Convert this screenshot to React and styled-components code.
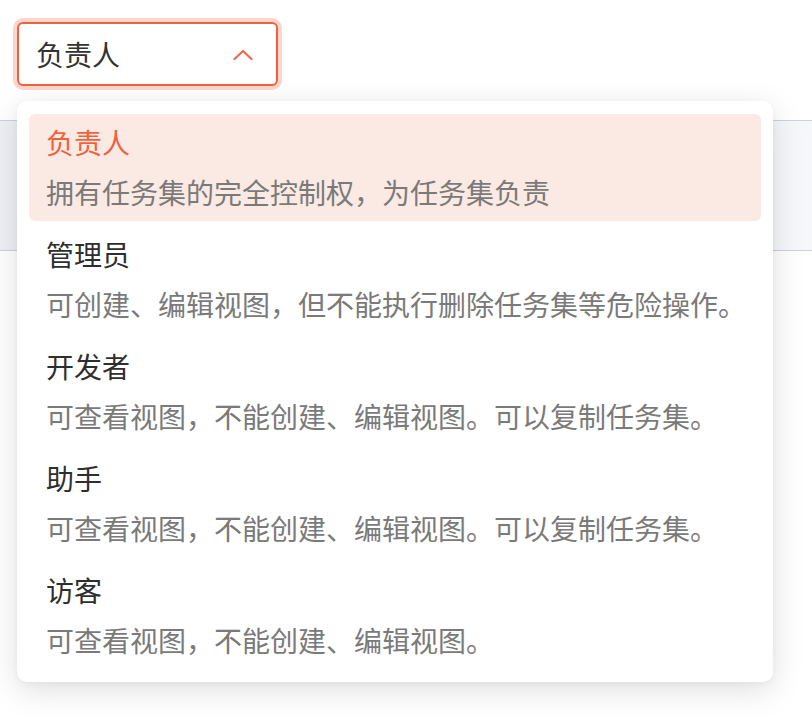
import React from "react";
import styled, { createGlobalStyle } from "styled-components";

const GlobalStyle = createGlobalStyle`
  body {
    margin: 0;
    background: #fff;
    font-family: "Noto Sans CJK SC", "Noto Sans", sans-serif;
  }
`;

const roles = [
  { name: "负责人", desc: "拥有任务集的完全控制权，为任务集负责" },
  { name: "管理员", desc: "可创建、编辑视图，但不能执行删除任务集等危险操作。" },
  { name: "开发者", desc: "可查看视图，不能创建、编辑视图。可以复制任务集。" },
  { name: "助手", desc: "可查看视图，不能创建、编辑视图。可以复制任务集。" },
  { name: "访客", desc: "可查看视图，不能创建、编辑视图。" },
];

const Page = styled.div`
  width: 812px;
  height: 722px;
  overflow: hidden;
`;

const Header = styled.div`
  padding: 22px 17px 0;
`;

const SelectWrap = styled.div`
  position: relative;
  width: 261px;
  z-index: 2;
`;

const Trigger = styled.button`
  box-sizing: border-box;
  width: 261px;
  height: 64px;
  display: flex;
  align-items: center;
  justify-content: space-between;
  padding: 0 23px 0 17px;
  background: #fff;
  border: 2px solid #f0623f;
  border-radius: 6px;
  box-shadow: 0 0 0 4px #fcd6cc;
  font-family: inherit;
  font-size: 28px;
  color: #333;
  cursor: pointer;
`;

const Menu = styled.ul`
  position: absolute;
  top: 79px;
  left: 0;
  box-sizing: border-box;
  width: 756px;
  margin: 0;
  padding: 13px 12px;
  list-style: none;
  display: flex;
  flex-direction: column;
  gap: 5px;
  background: #fff;
  border-radius: 10px;
  box-shadow: 0 8px 32px rgba(0, 0, 0, 0.13), 0 2px 6px rgba(0, 0, 0, 0.04);
`;

const Item = styled.li`
  padding: 8px 17px 9px;
  border-radius: 6px;
  background: ${(p) => (p.$active ? "#faeae3" : "transparent")};
  display: flex;
  flex-direction: column;
  gap: 10px;
  cursor: pointer;
`;

const Name = styled.div`
  font-size: 28px;
  line-height: 40px;
  white-space: nowrap;
  color: ${(p) => (p.$active ? "#f0623f" : "#2e2e2e")};
`;

const Desc = styled.div`
  font-size: 28px;
  line-height: 40px;
  white-space: nowrap;
  color: #7a7a7a;
`;

const Band = styled.div`
  margin-top: 34px;
  height: 129px;
  background: linear-gradient(90deg, #eef0f5, #f5f7fb);
  border-top: 1px solid #cdd0e0;
  border-bottom: 1px solid #cdd0e0;
`;

const Chevron = () => (
  <svg width="20" height="11" viewBox="0 0 20 11" fill="none">
    <polyline
      points="1.5,10 10,2 18.5,10"
      stroke="#f06a4a"
      strokeWidth="2.2"
      strokeLinecap="round"
      strokeLinejoin="round"
    />
  </svg>
);

export default function App() {
  return (
    <Page>
      <GlobalStyle />
      <Header>
        <SelectWrap>
          <Trigger>
            <span>负责人</span>
            <Chevron />
          </Trigger>
          <Menu>
            {roles.map((r, i) => (
              <Item key={r.name} $active={i === 0}>
                <Name $active={i === 0}>{r.name}</Name>
                <Desc>{r.desc}</Desc>
              </Item>
            ))}
          </Menu>
        </SelectWrap>
      </Header>
      <Band />
    </Page>
  );
}
